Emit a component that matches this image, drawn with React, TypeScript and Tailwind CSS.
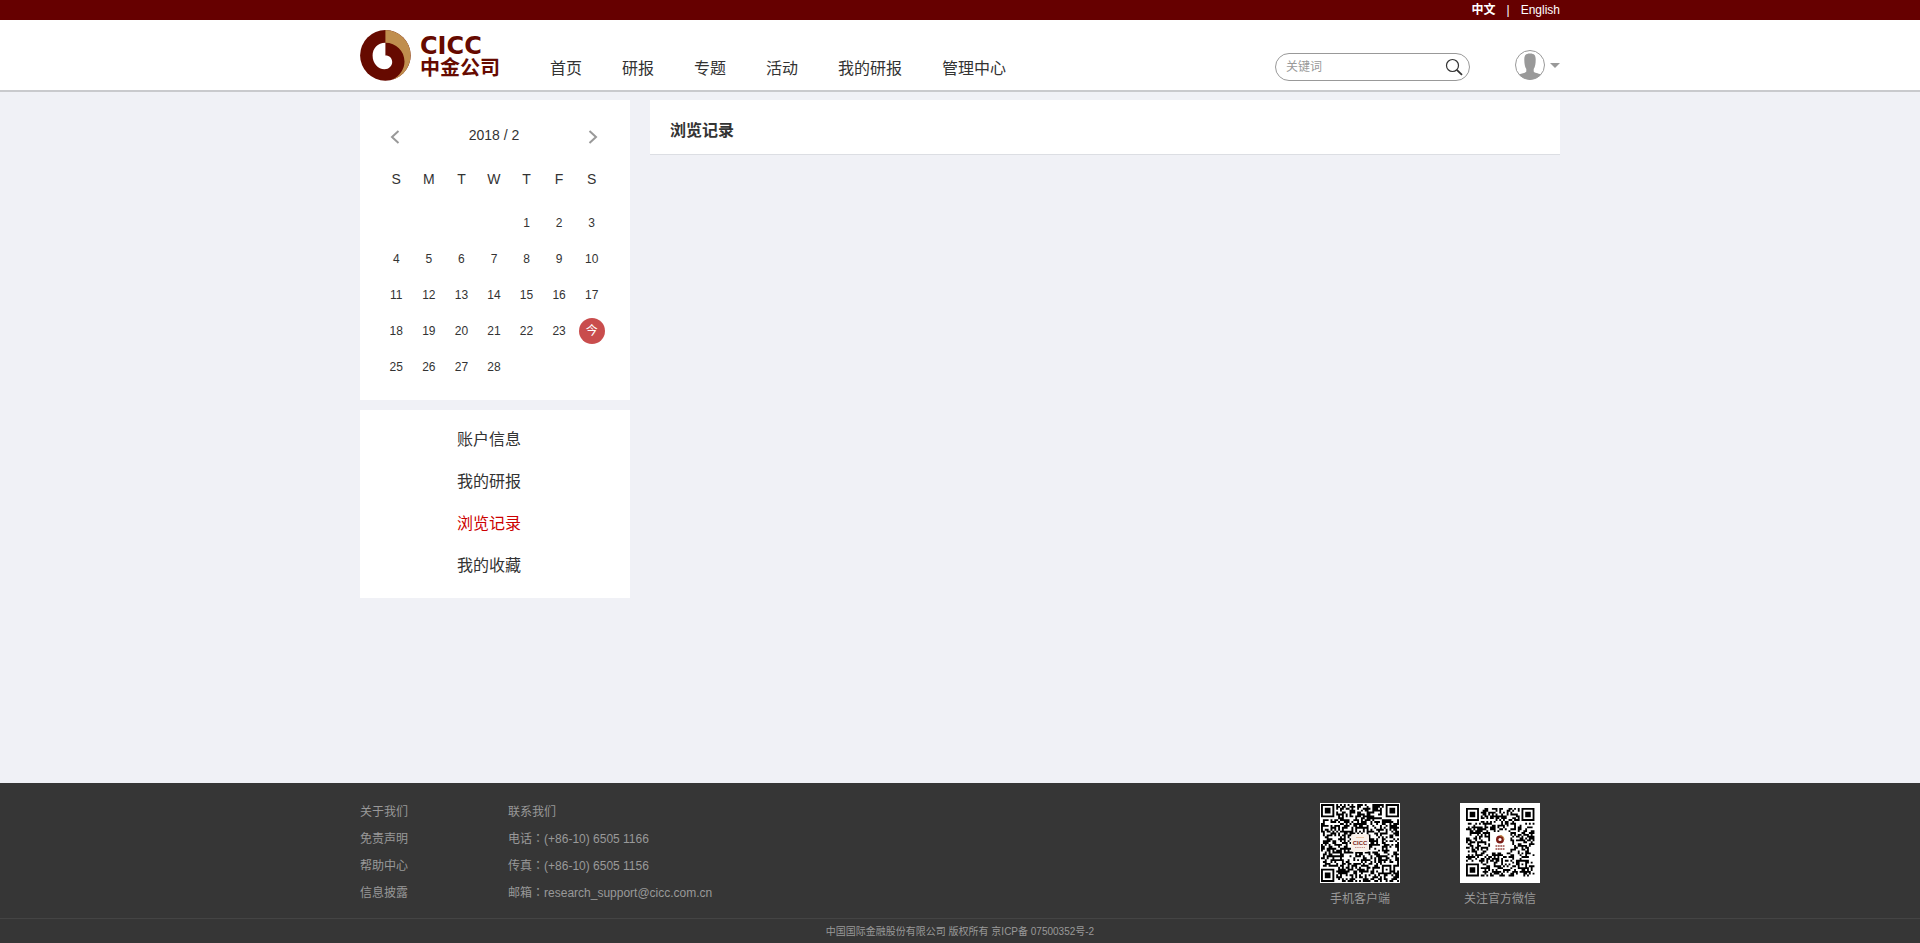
import React from 'react';

const NAV = ['首页', '研报', '专题', '活动', '我的研报', '管理中心'];
const MENU = ['账户信息', '我的研报', '浏览记录', '我的收藏'];
const ABOUT = ['关于我们', '免责声明', '帮助中心', '信息披露'];
const CONTACT = [
  ['电话', '(+86-10) 6505 1166'],
  ['传真', '(+86-10) 6505 1156'],
  ['邮箱', 'research_support@cicc.com.cn'],
];
const WEEKDAYS = ['S', 'M', 'T', 'W', 'T', 'F', 'S'];
const FIRST_WEEKDAY = 4;
const DAYS_IN_MONTH = 28;
const TODAY = 24;

const WEEKS = Array.from({ length: 5 }, (_, w) =>
  Array.from({ length: 7 }, (_, d) => {
    const day = w * 7 + d - FIRST_WEEKDAY + 1;
    return day >= 1 && day <= DAYS_IN_MONTH ? day : null;
  }),
);

function Logo() {
  return (
    <a href="#" aria-label="CICC 中金公司" className="mt-2.5 flex items-start gap-[9px] text-[#660a00]">
      <svg width="51" height="51" viewBox="0 0 51 51" aria-hidden="true">
        <circle cx="25.4" cy="25.4" r="25.3" fill="#660a00" />
        <path d="M25.4 .1A25.3 25.3 0 0 1 32 49.800C40 46 44.500 39 44.500 31.500C44.500 21 36 12.800 25.400 12.800Z" fill="#c08e4e" />
        <path d="M25.400 12.700C17.500 12.700 12.600 18.500 12.600 25.500C12.600 33.500 18 39.200 24.500 39.200C29 39.200 32.200 36 32.200 32C32.200 28 29.500 25.400 25.400 25.400Z" fill="#fff" />
      </svg>
      <span className="flex flex-col pt-[5px] font-bold">
        <span className="font-['DejaVu_Sans',sans-serif] text-2xl leading-[22px]">CICC</span>
        <span className="text-xl leading-[22px]">中金公司</span>
      </span>
    </a>
  );
}

function Calendar() {
  return (
    <section className="h-[300px] bg-white pt-5 pr-[22px] pl-5">
      <div className="flex h-[30px] items-center justify-between px-2">
        <button type="button" aria-label="Previous month" className="pt-1">
          <svg width="14" height="14" viewBox="0 0 14 14" fill="none" stroke="#999" strokeWidth="2">
            <path d="M10.500 1L4 7l6.500 6" />
          </svg>
        </button>
        <h2 className="text-sm">2018 / 2</h2>
        <button type="button" aria-label="Next month" className="pt-1">
          <svg width="14" height="14" viewBox="0 0 14 14" fill="none" stroke="#999" strokeWidth="2">
            <path d="M3.500 1L10 7l-6.500 6" />
          </svg>
        </button>
      </div>
      <table className="mt-[3px] w-full table-fixed text-center text-xs">
        <thead>
          <tr className="h-[52px] text-sm">
            {WEEKDAYS.map((d, i) => (
              <th key={i} className="p-0 font-normal">{d}</th>
            ))}
          </tr>
        </thead>
        <tbody>
          {WEEKS.map((week, i) => (
            <tr key={i} className="h-9">
              {week.map((day, j) => (
                <td key={j} className="p-0">
                  {day === TODAY ? (
                    <span className="mx-auto flex size-[26px] items-center justify-center rounded-full bg-[#c94d4d] text-white">今</span>
                  ) : (
                    day
                  )}
                </td>
              ))}
            </tr>
          ))}
        </tbody>
      </table>
    </section>
  );
}

function qrPath(n: number, seed: number, hole: number) {
  let s = seed;
  let d = '';
  const finder = (x: number, y: number): boolean | null => {
    for (const [fx, fy] of [[0, 0], [n - 7, 0], [0, n - 7]]) {
      const dx = x - fx;
      const dy = y - fy;
      if (dx >= -1 && dx <= 7 && dy >= -1 && dy <= 7) {
        const r = Math.max(Math.abs(dx - 3), Math.abs(dy - 3));
        return r === 3 || r <= 1;
      }
    }
    const r = Math.max(Math.abs(x - (n - 7)), Math.abs(y - (n - 7)));
    return r <= 2 ? r !== 1 : null;
  };
  for (let y = 0; y < n; y++) {
    for (let x = 0; x < n; x++) {
      s = (Math.imul(s, 1664525) + 1013904223) >>> 0;
      const mid = (n - 1) / 2;
      if (Math.abs(x - mid) < hole && Math.abs(y - mid) < hole) continue;
      const f = finder(x, y);
      if (f === null ? s >>> 16 > 32500 : f) d += `M${x} ${y}h1v1h-1z`;
    }
  }
  return d;
}

const APP_QR = qrPath(41, 77, 5);
const WECHAT_QR = qrPath(37, 1234, 6);

function AppCode() {
  return (
    <svg width="80" height="80" viewBox="0 0 80 80" role="img" aria-label="手机客户端" className="bg-white">
      <path d={APP_QR} transform="translate(1 1) scale(1.902)" fill="#000" />
      <rect x="31" y="31" width="18" height="18" rx="3" fill="#f7f0ea" />
      <path d="M36 34.500h8" stroke="#e9c3a4" />
      <text x="40" y="42" textAnchor="middle" fontSize="6" fontWeight="bold" fill="#7c1c16">CICC</text>
      <path d="M35 44.500h10" stroke="#c9928c" strokeDasharray="1.500 .7" />
    </svg>
  );
}

function WechatCode() {
  return (
    <svg width="80" height="80" viewBox="0 0 80 80" role="img" aria-label="关注官方微信" className="bg-white">
      <path d={WECHAT_QR} transform="translate(6 5) scale(1.85)" fill="#000" />
      <circle cx="40" cy="36.500" r="2.800" fill="#fff" stroke="#7c1c16" strokeWidth="2.400" />
      <path d="M40 32.700a4 4 0 0 1 4 4" fill="none" stroke="#c08e4e" strokeWidth="1.200" />
      <path d="M35.500 43h9M35.500 46h9" stroke="#9a4a44" strokeWidth="1.500" strokeDasharray="1.800 .6" />
    </svg>
  );
}

export default function App() {
  return (
    <div className="flex min-h-screen flex-col bg-[#f0f1f6] font-['Liberation_Sans','Noto_Sans_CJK_SC',sans-serif] text-[#333]">
      <div className="bg-[#660000]">
        <div className="mx-auto flex h-5 max-w-[1200px] items-center justify-end gap-[11px] text-xs text-white">
          <a href="#" className="font-bold">中文</a>
          <span>|</span>
          <a href="#">English</a>
        </div>
      </div>

      <header className="border-b-2 border-[#c9cacd] bg-white">
        <div className="mx-auto flex h-[70px] max-w-[1200px]">
          <Logo />
          <nav className="ml-[50px] flex gap-10 pt-[37px] text-base leading-6">
            {NAV.map((n) => (
              <a key={n} href="#" className="whitespace-nowrap">{n}</a>
            ))}
          </nav>
          <form className="mt-[33px] ml-auto flex h-7 w-[195px] items-center rounded-full border border-[#999] pr-1.5 pl-2.5">
            <input type="text" aria-label="关键词" placeholder="关键词" className="min-w-0 flex-1 text-xs outline-none placeholder:text-[#999]" />
            <button type="button" aria-label="搜索">
              <svg width="18" height="18" viewBox="0 0 18 18" fill="none" stroke="#333">
                <circle cx="7.500" cy="7.500" r="6" strokeWidth="1.200" />
                <path d="M11.800 11.800l5.200 5" strokeWidth="1.800" />
              </svg>
            </button>
          </form>
          <button type="button" aria-label="账户" className="mt-[30px] ml-[45px] flex h-[30px] items-center gap-[5px]">
            <svg width="30" height="30" viewBox="0 0 30 30">
              <circle cx="15" cy="15" r="14.500" fill="#fff" stroke="#999" />
              <path d="M15 3.500C10.500 3.500 9.300 5.500 9.300 9.500C9.300 13.500 9.800 17 11.300 19V21.500C10.500 23.200 7 23 4 24.500A14.300 14.300 0 0 0 26 24.500C23 23 19.500 23.200 18.700 21.500V19C20.200 17 20.700 13.500 20.700 9.500C20.700 5.500 19.500 3.500 15 3.500Z" fill="#999" />
            </svg>
            <svg width="10" height="5" viewBox="0 0 10 5"><path d="M0 0h10L5 5z" fill="#999" /></svg>
          </button>
        </div>
      </header>

      <main className="mx-auto flex w-full max-w-[1200px] flex-1 items-start gap-5 pt-2 pb-8">
        <aside className="flex w-[270px] shrink-0 flex-col gap-2.5">
          <Calendar />
          <nav className="flex flex-col gap-[18px] bg-white pt-[18px] pb-5 pl-[97px] text-base leading-6">
            {MENU.map((m) => (
              <a key={m} href="#" className={m === '浏览记录' ? 'text-[#cc0000]' : ''}>{m}</a>
            ))}
          </nav>
        </aside>
        <section className="min-w-0 flex-1 border-b border-[#dcdee3] bg-white px-5 pt-[19px] pb-[11px]">
          <h1 className="text-base leading-6 font-bold">浏览记录</h1>
        </section>
      </main>

      <footer className="bg-[#363636] text-xs text-[#999]">
        <div className="mx-auto flex h-[135px] max-w-[1200px] pt-4 leading-[27px]">
          <ul className="w-[148px]">
            {ABOUT.map((t) => (
              <li key={t}><a href="#">{t}</a></li>
            ))}
          </ul>
          <ul>
            <li>联系我们</li>
            {CONTACT.map(([label, value]) => (
              <li key={label}>
                {label}
                <span className="font-['Noto_Sans_CJK_TC',sans-serif] leading-none">：</span>
                {value}
              </li>
            ))}
          </ul>
          <div className="mt-1 mr-5 ml-auto flex gap-[60px]">
            <figure className="flex flex-col items-center gap-[3px]">
              <AppCode />
              <figcaption>手机客户端</figcaption>
            </figure>
            <figure className="flex flex-col items-center gap-[3px]">
              <WechatCode />
              <figcaption>关注官方微信</figcaption>
            </figure>
          </div>
        </div>
        <p className="h-[25px] border-t border-[#444] pt-px text-center text-[10px] leading-6">
          中国国际金融股份有限公司 版权所有 京ICP备 07500352号-2
        </p>
      </footer>
    </div>
  );
}
